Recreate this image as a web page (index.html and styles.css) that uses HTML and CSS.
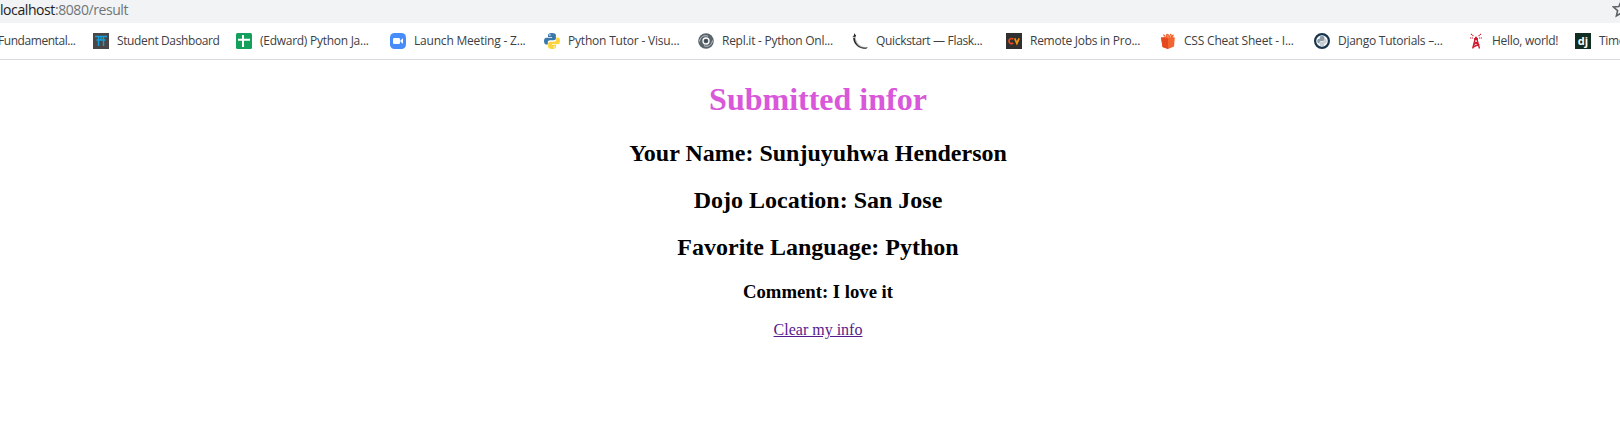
FILE: index.html
```
<!DOCTYPE html>
<html lang="en">
<head>
<meta charset="utf-8">
<title>Result</title>
<link rel="stylesheet" href="styles.css">
</head>
<body>
<div class="address"><div class="url">localhost<span class="path">:8080/result</span></div>
<svg class="star" width="18" height="18" viewBox="0 0 18 18"><path d="M9 1.500l2.100 5 5.400.5-4.100 3.600 1.200 5.300L9 13.100l-4.600 2.800 1.200-5.300L1.500 7l5.400-.5z" fill="none" stroke="#5f6368" stroke-width="1.600"/></svg></div>
<nav class="bookmarks">
<a class="item first"><span class="label w0">Fundamental...</span></a>
<a class="item short"><svg class="icon" viewBox="0 0 16 16"><path fill="#4a4648" d="M0 0h16v16H0z"/><path d="M2 3.500h12M3.500 7h9M5.500 4v9M10.500 4v9M8 4v3" stroke="#139fd7" stroke-width="1.400" fill="none"/></svg><span class="label w1">Student Dashboard</span></a>
<a class="item"><svg class="icon" viewBox="0 0 16 16"><rect width="16" height="16" rx="1.500" fill="#12a05c"/><path d="M2 6.700h12M7 2v12" stroke="#fff" stroke-width="2"/></svg><span class="label w2">(Edward) Python Ja...</span></a>
<a class="item"><svg class="icon" viewBox="0 0 16 16"><rect width="16" height="16" rx="4.500" fill="#468cfb"/><rect x="3" y="5" width="7" height="6" rx="1.300" fill="#fff"/><path d="M10.500 7.200L13 5.200v5.600l-2.500-2z" fill="#fff"/></svg><span class="label w3">Launch Meeting - Z...</span></a>
<a class="item"><svg class="icon" viewBox="0 0 16 16"><path fill="#3a78aa" d="M7.800 0C4.800 0 4 1 4 2.400V4h4v.7H2.300C.8 4.700 0 6 0 8s.8 3.400 2.200 3.400h1.600v-2c0-1.300 1-2.200 2.300-2.200h3.800c1.200 0 2-.9 2-2V2.400C11.900.8 10.700 0 7.800 0z"/><path fill="#fdd43b" d="M8.200 16c3 0 3.800-1 3.800-2.400V12H8v-.7h5.700C15.200 11.300 16 10 16 8s-.8-3.400-2.200-3.400h-1.600v2c0 1.300-1 2.200-2.300 2.200H6.100c-1.200 0-2 .9-2 2v2.800c0 1.600 1.200 2.400 4.100 2.400z"/><circle cx="5.900" cy="2" r=".8" fill="#fff"/><circle cx="10.100" cy="14" r=".8" fill="#fff"/></svg><span class="label w4">Python Tutor - Visu...</span></a>
<a class="item"><svg class="icon" viewBox="0 0 16 16"><circle cx="8" cy="8" r="7.800" fill="#59646b"/><g fill="none" stroke="#d9dde0" stroke-width=".8"><path d="M1.500 8.500C2 4 6 1.500 10 3.300M14.500 7.500c-.5 4.500-4.500 7-8.500 5.200"/><circle cx="8" cy="8" r="3" stroke="#fff" stroke-width="1.300"/></g><circle cx="8" cy="8" r="1.800" fill="#3f4b53"/></svg><span class="label w5">Repl.it - Python Onl...</span></a>
<a class="item"><svg class="icon" viewBox="0 0 16 16"><path d="M2 .3l2.200 2.200-.5 1c0 4.800 3 8.900 7.300 10.200l4.600.8-1 1.100c-5.800.9-10.700-2-12.700-7.200L1.300 5 .3 3.700l1.500-.8z" fill="#bbb"/><path d="M2 .3l2.200 2.400L3 4 .5 3.600 2 2.600zM1.300 5c0 5.500 5 11.100 13.300 10.600l1.200-1.100c-4 .5-7.500-.1-9.800-2.300C4 10 3 8 2.800 5z" fill="#272727"/></svg><span class="label w6">Quickstart — Flask...</span></a>
<a class="item"><svg class="icon" viewBox="0 0 16 16"><path fill="#303030" d="M0 0h16v16H0z"/><path d="M7.200 6.200C5.700 4.800 3 5.700 3 8.100s2.700 3.200 4.200 1.800" stroke="#ea4c18" stroke-width="1.700" fill="none"/><path d="M8.700 5.300l2.200 5 2.200-5" stroke="#f39412" stroke-width="1.700" fill="none"/></svg><span class="label w7">Remote Jobs in Pro...</span></a>
<a class="item"><svg class="icon" viewBox="0 0 16 16"><path fill="#f26430" d="M1 4.500L4 4 3 1.300l2 .6.700 1.500L6.500.7l2 .4L9 3l1.500-2.600L12 2l2-.5L13 4.200l1.800.3-.8 9L8 16l-5.500-2z"/><path fill="#e34820" d="M1 4.500l7 1V16l-5.500-2z"/><path d="M4 3.500h2M7.500 2.500l.8 2M11 2l-.8 2.500" stroke="#ffd1b5" stroke-width=".6"/></svg><span class="label w8">CSS Cheat Sheet - I...</span></a>
<a class="item"><svg class="icon" viewBox="0 0 16 16"><circle cx="8" cy="8" r="6.900" fill="#fff" stroke="#18344d" stroke-width="2.200"/><path d="M8 3C6 3 5.700 3.800 5.700 5v.7H8.500M5.700 5.700C3.700 5.500 3.200 6.600 3.200 8s.5 2.500 2.300 2.400C5.500 8.700 6 8 7.300 8h1.500c1.200 0 1.700-.7 1.700-1.700V5C10.500 3.600 9.500 3 8 3z" fill="#8d9ba8"/><path d="M8 13.200c2 0 2.400-.8 2.400-2v-.7c1.800.1 2.400-1 2.400-2.400s-.5-2.500-2-2.400c0 1.800-.8 2.700-2 2.700H7.200c-1.200 0-1.700.7-1.700 1.700v1.200c0 1.400 1 1.900 2.500 1.900z" fill="#c6cdd3"/></svg><span class="label w9">Django Tutorials –...</span></a>
<a class="item hello"><svg class="icon" viewBox="0 0 16 16"><g stroke="#d01c32" fill="none"><path d="M7 6.500L4.700 15.500M9 6.500L11.500 15.500M6.500 9l4 2.500-5.200 2.500M9.500 9L6 11.500" stroke-width="1.400"/><path d="M6 6h4M8 6V3.800" stroke-width="2"/><path d="M3 .8l2.500 2.500M2 5h3M13 .8l-2.500 2.500M14 5h-3" stroke-width="1.100" stroke-dasharray="1.400 .6"/></g></svg><span class="label w10">Hello, world!</span></a>
<a class="item last"><span class="icon dj">dj</span><span class="label w11">Time</span></a>
</nav>
<main class="page">
<h1>Submitted infor</h1>
<h2>Your Name: Sunjuyuhwa Henderson</h2>
<h2>Dojo Location: San Jose</h2>
<h2>Favorite Language: Python</h2>
<h3>Comment: I love it</h3>
<a class="clear" href="#">Clear my info</a>
</main>
</body>
</html>
```
FILE: styles.css
```
html{overflow:hidden}
body{margin:0;height:443px;background:#fff;overflow:hidden;font-family:"Liberation Serif",serif}
.address{height:23px;background:#f1f3f4;display:flex;justify-content:space-between;overflow:hidden;font:14px/19px "Open Sans",sans-serif;color:#202124}
.url{letter-spacing:-.42px}
.path{color:#70757a}
.star{flex:none;margin-right:-10px}
.bookmarks{height:36px;border-bottom:1px solid #d8dadd;display:flex;align-items:center;overflow:hidden;font:12px/16px "Open Sans",sans-serif;color:#3c4043}
.item{display:flex;align-items:center;gap:8px;flex:none;width:154px}
.first{width:93px}
.first .label{margin-left:-2px}
.short{width:143px}
.hello{width:107px}
.last{width:45px}
.icon{width:16px;height:16px;flex:none}
.label{white-space:nowrap}
.w0{letter-spacing:-.44px}
.w1{letter-spacing:-.38px}
.w2{letter-spacing:-.27px}
.w3,.w4,.w8{letter-spacing:-.2px}
.w5,.w7,.w9{letter-spacing:-.26px}
.w6{letter-spacing:-.33px}
.w10,.w11{letter-spacing:-.3px}
.dj{background:#102e22;color:#fff;font:bold 11px/15px "Open Sans",sans-serif;text-align:center}
.page{width:1636px;text-align:center;display:flow-root}
h1{color:#d957d9;font-size:32px;margin:21.44px 0}
h2{font-size:24px;margin:19.92px 0}
h3{font-size:18.72px;margin:18.72px 0}
.clear{color:#551a8b;font-size:16px}
```
